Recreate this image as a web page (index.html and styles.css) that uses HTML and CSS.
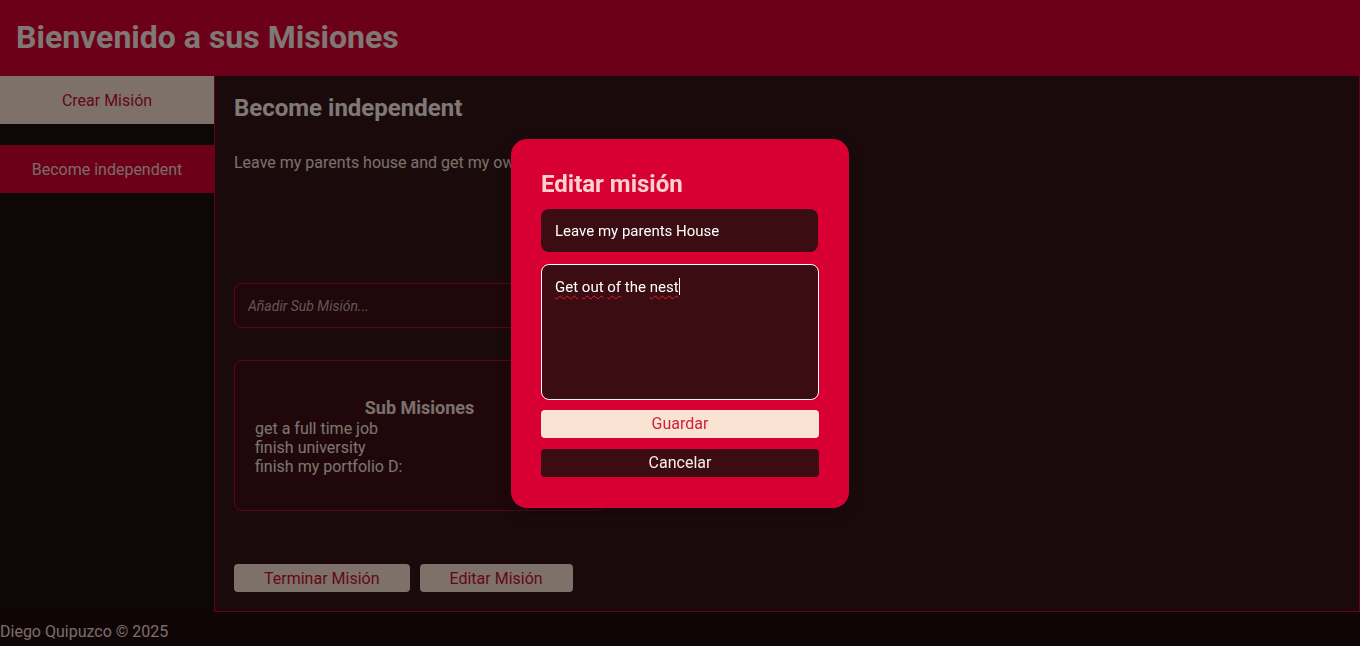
FILE: index.html
```html
<!DOCTYPE html>
<html lang="es">
<head>
<meta charset="utf-8">
<title>Misiones</title>
<link rel="stylesheet" href="styles.css">
</head>
<body>
<div class="app">
  <header class="topbar">
    <h1 class="topbar-title">Bienvenido a sus Misiones</h1>
  </header>
  <div class="layout">
    <aside class="sidebar">
      <button class="create-btn">Crear Misión</button>
      <ul class="mission-list">
        <li class="mission-item">Become independent</li>
      </ul>
    </aside>
    <main class="detail">
      <h2 class="detail-title">Become independent</h2>
      <p class="detail-desc">Leave my parents house and get my own place</p>
      <input class="sub-input" type="text" placeholder="Añadir Sub Misión...">
      <section class="sub-box">
        <h3 class="sub-title">Sub Misiones</h3>
        <ul class="sub-list">
          <li>get a full time job</li>
          <li>finish university</li>
          <li>finish my portfolio D:</li>
        </ul>
      </section>
      <div class="actions">
        <button class="action-btn">Terminar Misión</button>
        <button class="action-btn">Editar Misión</button>
      </div>
    </main>
  </div>
  <footer class="footer">Diego Quipuzco © 2025</footer>
</div>

<div class="overlay">
  <div class="modal">
    <h2 class="modal-title">Editar misión</h2>
    <div class="modal-input">Leave my parents House</div>
    <div class="modal-textarea"><span class="typo">Get</span> <span class="typo">out</span> <span class="typo">of</span> the <span class="typo">nest</span><span class="caret"></span></div>
    <button class="modal-btn save">Guardar</button>
    <button class="modal-btn cancel">Cancelar</button>
  </div>
</div>
</body>
</html>
```

FILE: styles.css
```css
* { box-sizing: border-box; }

html, body {
  margin: 0;
  padding: 0;
  height: 100%;
}

body {
  font-family: Roboto, "Liberation Sans", sans-serif;
  background: #200a0c;
  color: #f3e0d8;
}

.app {
  display: flex;
  flex-direction: column;
  height: 100vh;
}

.topbar {
  height: 76px;
  flex: none;
  background: #da0032;
  display: flex;
  align-items: center;
  padding-left: 16px;
  padding-bottom: 2px;
}

.topbar-title {
  margin: 0;
  font-size: 32px;
  font-weight: 700;
  color: #fff0e8;
}

.layout {
  flex: 1;
  display: flex;
  min-height: 0;
}

.sidebar {
  width: 214px;
  flex: none;
  background: #1d0e0e;
  display: flex;
  flex-direction: column;
}

.create-btn {
  height: 48px;
  border: none;
  background: #fce2d2;
  color: #c8102e;
  font-family: inherit;
  font-size: 16px;
}

.mission-list {
  list-style: none;
  margin: 21px 0 0;
  padding: 0;
}

.mission-item {
  height: 48px;
  background: #d80032;
  color: #f5d6d0;
  font-size: 16px;
  display: flex;
  align-items: center;
  justify-content: center;
}

.detail {
  flex: 1;
  background: #361418;
  border: 1px solid #d80032;
  border-top: none;
  padding: 19px 19px 19px;
  display: flex;
  flex-direction: column;
  align-items: flex-start;
}

.detail-title {
  margin: 0;
  font-size: 24px;
  font-weight: 700;
  color: #fff0e8;
  line-height: 26px;
}

.detail-desc {
  margin: 32px 0 0;
  font-size: 16px;
  line-height: 20px;
  color: #f5e0d8;
}

.sub-input {
  margin-top: 110px;
  width: 371px;
  height: 45px;
  border: 1px solid #b01236;
  border-radius: 8px;
  background: #3e0e16;
  padding: 0 13px;
  font-family: inherit;
  font-size: 14px;
  color: #f3e0d8;
}

.sub-input::placeholder {
  color: #c8aaa8;
  font-style: italic;
}

.sub-box {
  margin-top: 32px;
  width: 371px;
  height: 151px;
  border: 1px solid #b01236;
  border-radius: 8px;
  background: #3e0e16;
  padding: 36px 20px 0;
}

.sub-title {
  margin: 0;
  text-align: center;
  font-size: 18px;
  font-weight: 700;
  line-height: 22px;
  color: #f5e0d8;
}

.sub-list {
  list-style: none;
  margin: 0;
  padding: 0;
  font-size: 16px;
  line-height: 19px;
  color: #fbe8e0;
}

.actions {
  margin-top: auto;
  display: flex;
  gap: 10px;
}

.action-btn {
  height: 28px;
  padding: 0 30px;
  border: none;
  border-radius: 4px;
  background: #fce2d2;
  color: #c8102e;
  font-family: inherit;
  font-size: 16px;
}

.footer {
  height: 34px;
  flex: none;
  display: flex;
  align-items: center;
  padding-top: 4px;
  background: #200a0c;
  font-size: 16px;
  color: #f0dcd4;
}

.overlay {
  position: fixed;
  inset: 0;
  background: rgba(0, 0, 0, 0.5);
  display: flex;
  align-items: center;
  justify-content: center;
}

.modal {
  width: 338px;
  height: 369px;
  background: #d80032;
  border-radius: 16px;
  padding: 30px 30px 0;
  display: flex;
  flex-direction: column;
  box-shadow: 0 4px 16px rgba(0, 0, 0, 0.35);
}

.modal-title {
  margin: 0;
  font-size: 24px;
  font-weight: 700;
  line-height: 30px;
  color: #fcd2d0;
}

.modal-input {
  margin-top: 10px;
  height: 43px;
  width: 277px;
  background: #3b0c12;
  border-radius: 8px;
  display: flex;
  align-items: center;
  padding: 1px 14px 0;
  font-size: 15px;
  color: #ffffff;
}

.modal-textarea {
  margin-top: 12px;
  height: 136px;
  background: #3b0c12;
  border: 1px solid #ffffff;
  border-radius: 8px;
  padding: 13px 13px;
  font-size: 15px;
  line-height: 19px;
  color: #ffffff;
}

.typo {
  text-decoration: underline wavy #e0202a;
  text-decoration-thickness: 1px;
  text-underline-offset: 3px;
}

.caret {
  display: inline-block;
  width: 1px;
  height: 17px;
  background: #ffffff;
  vertical-align: -3px;
}

.modal-btn {
  height: 28px;
  border: none;
  border-radius: 4px;
  font-family: inherit;
  font-size: 16px;
}

.save {
  margin-top: 10px;
  background: #fbe3d3;
  color: #d0203a;
}

.cancel {
  margin-top: 11px;
  background: #3b0c12;
  color: #fbeee8;
}
```
